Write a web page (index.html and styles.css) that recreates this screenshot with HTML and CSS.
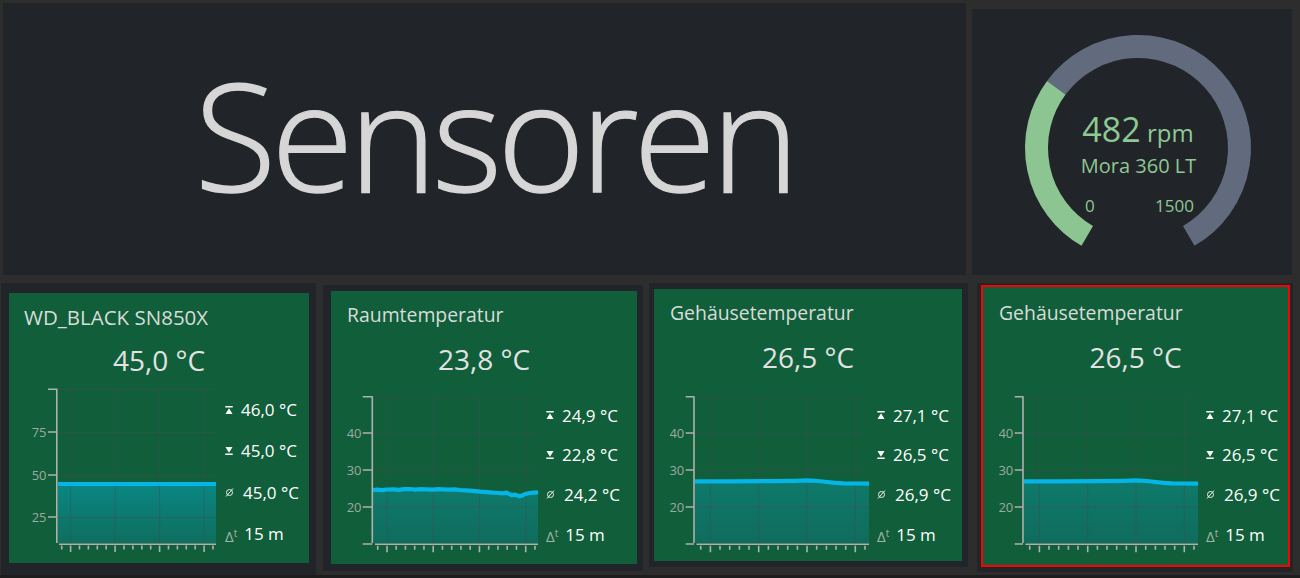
FILE: index.html
```html
<!DOCTYPE html>
<html lang="de">
<head>
<meta charset="utf-8">
<title>Sensoren</title>
<link rel="stylesheet" href="styles.css">
</head>
<body>
<div class="page">
  <div class="row-top">
    <section class="panel panel-title"><h1 class="headline">Sensoren</h1></section>
    <section class="panel panel-gauge">
      <svg class="gauge" width="320" height="266" viewBox="0 0 320 266">
        <path class="gauge-track" d="M84.3 78.77 A101.5 101.5 0 1 1 216.75 226.9"/>
        <path class="gauge-value" d="M115.25 226.9 A101.5 101.5 0 0 1 84.3 78.77"/>
        <text class="gauge-main" x="166" y="133"><tspan class="gauge-num">482</tspan> <tspan>rpm</tspan></text>
        <text class="gauge-name" x="166.5" y="164.3">Mora 360 LT</text>
        <text class="gauge-min" x="113" y="202.7">0</text>
        <text class="gauge-max" x="222" y="202.7">1500</text>
      </svg>
    </section>
  </div>

  <div class="row-cards">
    <article class="card card-1">
      <div class="tile">
        <h2 class="tile-title">WD_BLACK SN850X</h2>
        <div class="tile-value">45,0 °C</div>
        <div class="chart-row">
          <svg class="chart" width="192" height="166" viewBox="0 0 192 166">
            <defs><linearGradient id="f1" x1="0" y1="0" x2="0" y2="1"><stop offset="0" stop-color="#098783"/><stop offset="1" stop-color="#0f6e5f"/></linearGradient></defs>
            <path fill="url(#f1)" d="M34 96 H192 V155 H34 Z"/>
            <path class="grid" d="M34 1.5H192M34 44.5H192M34 87.5H192M34 129.5H192M46.6 1V155M91.1 1V155M135.6 1V155M180.1 1V155"/>
            <path class="line" d="M34 96 H192"/>
            <path class="axis" d="M32.8 0.5V155M24 1.2H32.8M24 44H32.8M24 87H32.8M24 129H32.8M35 156.3H192"/>
            <path class="axis" d="M37.7 157.5v4M46.6 157.5v6.5M55.5 157.5v4M64.4 157.5v4M73.3 157.5v4M82.2 157.5v4M91.1 157.5v6.5M100 157.5v4M108.9 157.5v4M117.8 157.5v4M126.7 157.5v4M135.6 157.5v6.5M144.5 157.5v4M153.4 157.5v4M162.3 157.5v4M171.2 157.5v4M180.1 157.5v6.5M189 157.5v4"/>
            <text class="ylab" x="22.5" y="48.5">75</text>
            <text class="ylab" x="22.5" y="91.5">50</text>
            <text class="ylab" x="22.5" y="133.5">25</text>
          </svg>
          <ul class="stats">
            <li class="stat"><svg class="ico" viewBox="0 0 8 8"><rect x="0.3" y="0" width="7.4" height="1.5"/><path d="M4 2.3 L7.5 8 H0.5 Z"/></svg><span>46,0 °C</span></li>
            <li class="stat"><svg class="ico" viewBox="0 0 8 8"><path d="M0.5 0 H7.5 L4 5.7 Z"/><rect x="0.3" y="6.5" width="7.4" height="1.5"/></svg><span>45,0 °C</span></li>
            <li class="stat"><svg class="ico ico-d" viewBox="0 0 9 9"><circle cx="4.5" cy="4.5" r="3"/><path d="M1 8.5 L8 0.5"/></svg><span>45,0 °C</span></li>
            <li class="stat"><span class="dt">Δ<span class="dt-t">t</span></span><span>15 m</span></li>
          </ul>
        </div>
      </div>
    </article>

    <article class="card card-2">
      <div class="tile">
        <h2 class="tile-title">Raumtemperatur</h2>
        <div class="tile-value">23,8 °C</div>
        <div class="chart-row">
          <svg class="chart" width="191" height="158" viewBox="0 0 191 158">
            <defs><linearGradient id="f2" x1="0" y1="0" x2="0" y2="1"><stop offset="0" stop-color="#0e7a6b"/><stop offset="1" stop-color="#0f6c5d"/></linearGradient></defs>
            <path fill="url(#f2)" d="M26 94 L30 93.6 L35 94.1 L40 93.5 L46 93.3 L52 93.8 L57 93.1 L63 93 L68 93.6 L74 93.2 L80 93.3 L86 93.7 L91 93.1 L96 93.3 L102 93.7 L108 93.4 L113 94 L118 94.3 L123 94.7 L128 95.2 L133 95.7 L140 96.2 L146 96.7 L151 97 L156 97.3 L159.5 96.6 L162 97.8 L165 99.3 L168 98.6 L171 99.8 L173 100.3 L176 99.2 L178 98 L183 97 L187 96.6 L191 96.3 L191 147 L26 147 Z"/>
            <path class="grid" d="M26 0.7H191M26 37H191M26 74H191M26 111H191M40 0.7V147M86.2 0.7V147M132.5 0.7V147M178.7 0.7V147"/>
            <path class="line" d="M26 94 L30 93.6 L35 94.1 L40 93.5 L46 93.3 L52 93.8 L57 93.1 L63 93 L68 93.6 L74 93.2 L80 93.3 L86 93.7 L91 93.1 L96 93.3 L102 93.7 L108 93.4 L113 94 L118 94.3 L123 94.7 L128 95.2 L133 95.7 L140 96.2 L146 96.7 L151 97 L156 97.3 L159.5 96.6 L162 97.8 L165 99.3 L168 98.6 L171 99.8 L173 100.3 L176 99.2 L178 98 L183 97 L187 96.6 L191 96.3"/>
            <path class="axis" d="M25.3 0.2V147M15.7 0.7H25.3M15.7 37H25.3M15.7 74H25.3M15.7 111H25.3M15.7 148H25.3M28 148.3H191"/>
            <path class="axis" d="M30.7 149.7v4M40 149.7v6.5M49.2 149.7v4M58.45 149.7v4M67.7 149.7v4M76.95 149.7v4M86.2 149.7v6.5M95.45 149.7v4M104.7 149.7v4M113.95 149.7v4M123.2 149.7v4M132.45 149.7v6.5M141.7 149.7v4M150.95 149.7v4M160.2 149.7v4M169.45 149.7v4M178.7 149.7v6.5M187.95 149.7v4"/>
            <text class="ylab" x="14.5" y="41.5">40</text>
            <text class="ylab" x="14.5" y="78.5">30</text>
            <text class="ylab" x="14.5" y="115.5">20</text>
          </svg>
          <ul class="stats">
            <li class="stat"><svg class="ico" viewBox="0 0 8 8"><rect x="0.3" y="0" width="7.4" height="1.5"/><path d="M4 2.3 L7.5 8 H0.5 Z"/></svg><span>24,9 °C</span></li>
            <li class="stat"><svg class="ico" viewBox="0 0 8 8"><path d="M0.5 0 H7.5 L4 5.7 Z"/><rect x="0.3" y="6.5" width="7.4" height="1.5"/></svg><span>22,8 °C</span></li>
            <li class="stat"><svg class="ico ico-d" viewBox="0 0 9 9"><circle cx="4.5" cy="4.5" r="3"/><path d="M1 8.5 L8 0.5"/></svg><span>24,2 °C</span></li>
            <li class="stat"><span class="dt">Δ<span class="dt-t">t</span></span><span>15 m</span></li>
          </ul>
        </div>
      </div>
    </article>

    <article class="card card-3">
      <div class="tile">
        <h2 class="tile-title">Gehäusetemperatur</h2>
        <div class="tile-value">26,5 °C</div>
        <div class="chart-row">
          <svg class="chart" width="199" height="158" viewBox="0 0 199 158">
            <defs><linearGradient id="f3" x1="0" y1="0" x2="0" y2="1"><stop offset="0" stop-color="#0e7a6b"/><stop offset="1" stop-color="#0f6c5d"/></linearGradient></defs>
            <path fill="url(#f3)" d="M25 85.3 L60 85.3 L100 85.2 L125 84.8 L137 84.4 L148 85 L157 86 L165 86.8 L173 87.3 L185 87.5 L199 87.6 L199 147 L25 147 Z"/>
            <path class="grid" d="M25 0.7H199M25 37H199M25 74H199M25 111H199M40.4 0.7V147M88.7 0.7V147M137 0.7V147M185.3 0.7V147"/>
            <path class="line" d="M25 85.3 L60 85.3 L100 85.2 L125 84.8 L137 84.4 L148 85 L157 86 L165 86.8 L173 87.3 L185 87.5 L199 87.6"/>
            <path class="axis" d="M24 0.2V147M15.7 0.7H24M15.7 37H24M15.7 74H24M15.7 111H24M15.7 148H24M26.5 148.3H199"/>
            <path class="axis" d="M30.7 149.7v4M40.4 149.7v6.5M50 149.7v4M59.7 149.7v4M69.4 149.7v4M79 149.7v4M88.7 149.7v6.5M98.4 149.7v4M108 149.7v4M117.7 149.7v4M127.4 149.7v4M137 149.7v6.5M146.7 149.7v4M156.4 149.7v4M166 149.7v4M175.7 149.7v4M185.3 149.7v6.5M195 149.7v4"/>
            <text class="ylab" x="14.3" y="41.5">40</text>
            <text class="ylab" x="14.3" y="78.5">30</text>
            <text class="ylab" x="14.3" y="115.5">20</text>
          </svg>
          <ul class="stats">
            <li class="stat"><svg class="ico" viewBox="0 0 8 8"><rect x="0.3" y="0" width="7.4" height="1.5"/><path d="M4 2.3 L7.5 8 H0.5 Z"/></svg><span>27,1 °C</span></li>
            <li class="stat"><svg class="ico" viewBox="0 0 8 8"><path d="M0.5 0 H7.5 L4 5.7 Z"/><rect x="0.3" y="6.5" width="7.4" height="1.5"/></svg><span>26,5 °C</span></li>
            <li class="stat"><svg class="ico ico-d" viewBox="0 0 9 9"><circle cx="4.5" cy="4.5" r="3"/><path d="M1 8.5 L8 0.5"/></svg><span>26,9 °C</span></li>
            <li class="stat"><span class="dt">Δ<span class="dt-t">t</span></span><span>15 m</span></li>
          </ul>
        </div>
      </div>
    </article>

    <article class="card card-4">
      <div class="tile">
        <h2 class="tile-title">Gehäusetemperatur</h2>
        <div class="tile-value">26,5 °C</div>
        <div class="chart-row">
          <svg class="chart" width="199" height="158" viewBox="0 0 199 158">
            <defs><linearGradient id="f4" x1="0" y1="0" x2="0" y2="1"><stop offset="0" stop-color="#0e7a6b"/><stop offset="1" stop-color="#0f6c5d"/></linearGradient></defs>
            <path fill="url(#f4)" d="M25 85.3 L60 85.3 L100 85.2 L125 84.8 L137 84.4 L148 85 L157 86 L165 86.8 L173 87.3 L185 87.5 L199 87.6 L199 147 L25 147 Z"/>
            <path class="grid" d="M25 0.7H199M25 37H199M25 74H199M25 111H199M40.4 0.7V147M88.7 0.7V147M137 0.7V147M185.3 0.7V147"/>
            <path class="line" d="M25 85.3 L60 85.3 L100 85.2 L125 84.8 L137 84.4 L148 85 L157 86 L165 86.8 L173 87.3 L185 87.5 L199 87.6"/>
            <path class="axis" d="M24 0.2V147M15.7 0.7H24M15.7 37H24M15.7 74H24M15.7 111H24M15.7 148H24M26.5 148.3H199"/>
            <path class="axis" d="M30.7 149.7v4M40.4 149.7v6.5M50 149.7v4M59.7 149.7v4M69.4 149.7v4M79 149.7v4M88.7 149.7v6.5M98.4 149.7v4M108 149.7v4M117.7 149.7v4M127.4 149.7v4M137 149.7v6.5M146.7 149.7v4M156.4 149.7v4M166 149.7v4M175.7 149.7v4M185.3 149.7v6.5M195 149.7v4"/>
            <text class="ylab" x="14.3" y="41.5">40</text>
            <text class="ylab" x="14.3" y="78.5">30</text>
            <text class="ylab" x="14.3" y="115.5">20</text>
          </svg>
          <ul class="stats">
            <li class="stat"><svg class="ico" viewBox="0 0 8 8"><rect x="0.3" y="0" width="7.4" height="1.5"/><path d="M4 2.3 L7.5 8 H0.5 Z"/></svg><span>27,1 °C</span></li>
            <li class="stat"><svg class="ico" viewBox="0 0 8 8"><path d="M0.5 0 H7.5 L4 5.7 Z"/><rect x="0.3" y="6.5" width="7.4" height="1.5"/></svg><span>26,5 °C</span></li>
            <li class="stat"><svg class="ico ico-d" viewBox="0 0 9 9"><circle cx="4.5" cy="4.5" r="3"/><path d="M1 8.5 L8 0.5"/></svg><span>26,9 °C</span></li>
            <li class="stat"><span class="dt">Δ<span class="dt-t">t</span></span><span>15 m</span></li>
          </ul>
        </div>
      </div>
    </article>
  </div>
</div>
</body>
</html>
```

FILE: styles.css
```css
* { box-sizing: border-box; }

html { background: #1d1d1d; }

body {
  margin: 0;
  font-family: "Open Sans", "Noto Sans", sans-serif;
}

.page {
  height: 575px;
  background: #2d2d2d;
  overflow: hidden;
}

.row-top {
  display: flex;
  align-items: flex-start;
}

.panel { background: #212529; }

.panel-title {
  margin: 3px 0 0 3px;
  width: 963px;
  height: 272px;
  display: flex;
  align-items: center;
  justify-content: center;
  padding: 0 0 10px 20px;
}

.headline {
  margin: 0;
  font-size: 150px;
  font-weight: 300;
  line-height: 1;
  letter-spacing: -5px;
  color: #d6d6d6;
  -webkit-text-stroke: 1.4px #d6d6d6;
}

.panel-gauge {
  margin: 9px 0 0 6px;
  width: 320px;
  height: 266px;
}

.gauge { display: block; }
.gauge-track { fill: none; stroke: #616b7d; stroke-width: 23; }
.gauge-value { fill: none; stroke: #8dc592; stroke-width: 23; }
.gauge text { fill: #8ec893; font-family: "Open Sans", sans-serif; }
.gauge-main { text-anchor: middle; font-size: 24px; }
.gauge-num { font-size: 34px; }
.gauge-name { text-anchor: middle; font-size: 20px; }
.gauge-min { font-size: 17px; }
.gauge-max { font-size: 17px; text-anchor: end; }

.row-cards {
  display: flex;
  align-items: flex-start;
}

.card { background: #212529; }

.card-1 { margin: 8px 0 0 1px; width: 315px; height: 292px; padding: 10px 7px 12px 8px; }
.card-2 { margin: 10px 0 0 7px; width: 320px; height: 286px; padding: 6px 6px 7px 8px; }
.card-3 { margin: 8px 0 0 6px; width: 319px; height: 284px; padding: 6px 6px 6px 5px; }
.card-4 { margin: 8px 0 0 9px; width: 316px; height: 289px; padding: 2px 3px 5px 4px; }

.tile {
  height: 100%;
  background: #115e3a;
  padding-top: 12px;
}

.card-4 .tile {
  border: 2px solid #ff0000;
  padding-top: 14px;
}

.tile-title {
  margin: 0;
  padding-left: 16px;
  font-size: 19.4px;
  font-weight: 400;
  line-height: 24px;
  color: #d8dcd9;
}

.tile-value {
  margin-top: 15px;
  text-align: center;
  font-size: 28px;
  line-height: 34px;
  color: #e2e2e2;
}

.chart-row {
  display: flex;
  align-items: flex-start;
  padding-left: 16px;
  margin-top: 22px;
}

.card-1 .tile-title { padding-left: 15px; font-size: 20.5px; }
.card-1 .tile-value { margin-top: 14px; }
.card-1 .chart-row { padding-left: 15px; margin-top: 11px; }
.card-2 .chart-row { margin-top: 20px; }

.chart { display: block; flex: none; }
.chart .grid { fill: none; stroke: rgba(72, 74, 86, 0.45); stroke-width: 1; }
.chart .line { fill: none; stroke: #04b5e7; stroke-width: 4.2; stroke-linejoin: round; }
.chart .axis { fill: none; stroke: #b0b0b0; stroke-width: 1.6; }
.chart .ylab {
  font-family: "Open Sans", sans-serif;
  font-size: 13px;
  fill: #9ea9a2;
  text-anchor: end;
}

.stats {
  list-style: none;
  margin: 0 0 0 8px;
  padding: 0;
}

.card-1 .stats { margin-left: 9px; padding-top: 1.5px; }

.stat {
  display: flex;
  align-items: center;
  height: 39.6px;
  font-size: 17px;
  line-height: 24px;
  color: #ffffff;
  white-space: nowrap;
}

.card-1 .stat { height: 41.3px; }

.ico {
  flex: none;
  width: 8px;
  height: 8px;
  margin: -1px 8px 0 0;
  fill: #ffffff;
}

.ico-d {
  width: 9px;
  height: 9px;
  margin-right: 9px;
  fill: none;
  stroke: #eeeeee;
  stroke-width: 1;
}

.dt {
  margin-right: 7px;
  font-size: 15px;
  line-height: 24px;
  color: #9fb3a6;
}

.dt-t {
  font-size: 10px;
  vertical-align: 5px;
}
```
